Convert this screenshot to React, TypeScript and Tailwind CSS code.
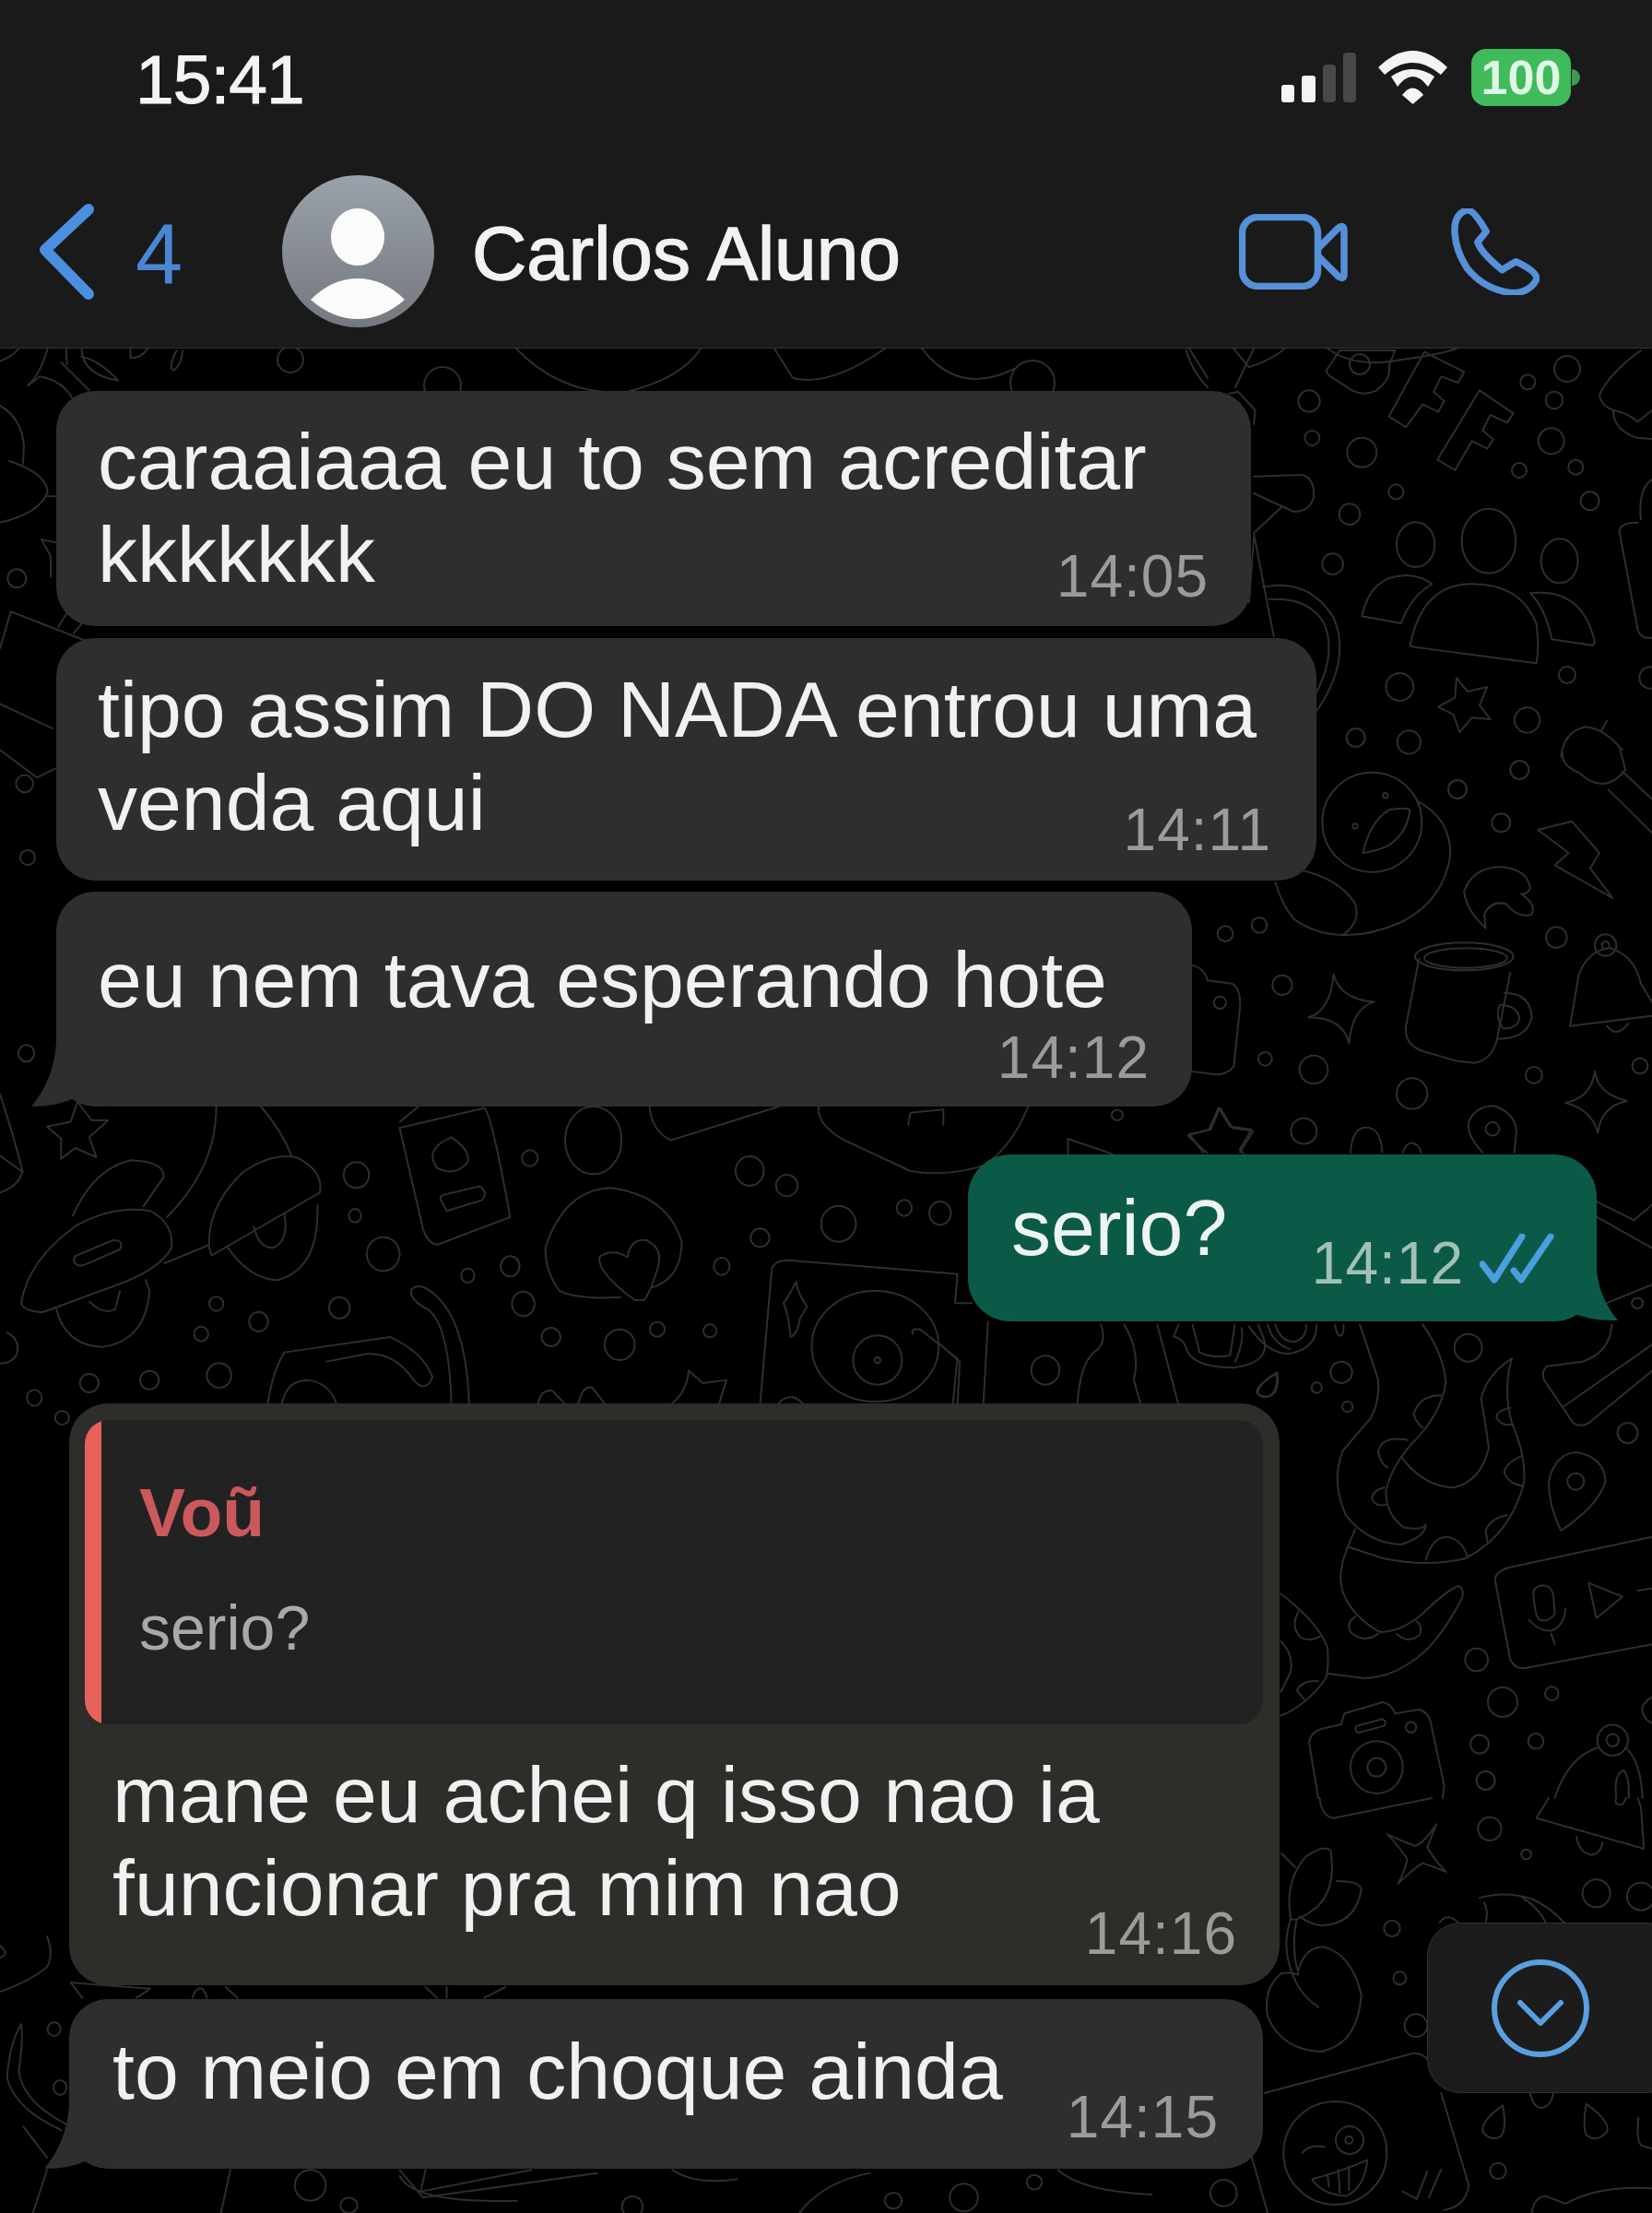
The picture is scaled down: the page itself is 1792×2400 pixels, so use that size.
type Dot = number[];

interface SceneProps {
  t: string;
  paths: string[];
  dots: Dot[];
}

// wallpaper pieces, each one written in the coordinates of its own crop
const scenes: SceneProps[] = [
  {
    t: "translate(1280 370) scale(0.3333)",
    dots: [[420, 195, 35], [430, 315, 24], [592, 362, 48], [703, 490, 24], [552, 563, 34], [497, 725, 34], [1132, 133, 24], [1218, 192, 28], [1208, 325, 42], [1104, 420, 24], [1288, 410, 24], [1334, 520, 30], [715, 1125, 45], [1260, 1086, 27], [1130, 1233, 41], [572, 1290, 30], [745, 1305, 38], [1530, 1095, 35], [585, 75, 33], [1005, 650, 88, 105], [767, 662, 62, 73], [1235, 715, 60, 72]],
    paths: [
      "M480 90 L520 30 L700 30 L680 80 Q690 120 640 160 Q600 180 560 160 L490 115 Q470 100 480 90",
      "M795 35 L925 100 L905 135 L850 115 L825 165 L860 195 L840 230 L790 205 L735 280 L680 245 Z",
      "M975 160 L1085 235 L1065 265 L1010 240 L985 290 L1020 320 L1000 350 L950 325 L895 420 L838 385 Z",
      "M750 985 Q790 790 950 790 Q1110 790 1160 920 Q1170 1000 1160 1048 L760 995 Q745 990 750 985Z",
      "M592 895 Q620 760 740 762 Q790 765 820 790 Q750 830 720 918 Z",
      "M1140 820 Q1310 800 1350 980 L1345 990 L1210 970 Q1190 870 1140 820Z",
      "M900 1095 L935 1140 L1000 1125 L975 1185 L1010 1230 L950 1225 L910 1272 L890 1215 L840 1190 L895 1160 Z",
      "M1500 30 Q1400 100 1365 175 Q1370 210 1410 225 Q1410 290 1490 315 L1536 318",
      "M1410 225 Q1450 230 1490 262 L1536 225",
      "M1536 450 Q1490 480 1500 580 M1490 590 Q1430 590 1430 620 L1490 940 Q1500 970 1536 965",
      "M240 440 L400 435 Q440 450 435 510 Q420 555 370 555 L240 495",
      "M330 540 L240 625 L305 960 M240 640 L225 850",
      "M270 800 Q420 770 500 900 Q560 1040 440 1210 M290 840 Q420 830 470 920 Q510 1020 440 1150",
      "M20 30 Q40 100 90 150 M175 25 L225 85 Q300 60 340 25 M160 170 L190 165 L245 225 L240 270",
      "M1240 1350 Q1250 1270 1320 1255 Q1380 1260 1440 1330 M1390 1235 L1370 1270",
    ],
  },
  {
    t: "translate(1280 810) scale(0.3333)",
    dots: [[1105, 75, 30], [903, 138, 30], [1045, 247, 30], [1225, 620, 34], [147, 608, 25], [258, 580, 25], [333, 775, 32], [277, 1015, 22], [435, 1050, 46], [755, 1128, 50], [1152, 1068, 27], [1497, 1038, 25], [403, 1250, 42], [130, 832, 20], [1017, 1243, 22], [625, 245, 162], [668, 158, 8], [570, 258, 8], [925, 682, 160, 45], [930, 687, 135, 32], [1385, 645, 35], [1385, 645, 12]],
    paths: [
      "M770 175 Q880 230 880 350 Q860 500 720 570 Q620 615 530 612",
      "M390 400 Q520 430 570 510 Q590 570 530 612 Q440 610 370 560 Q330 510 310 440",
      "M595 345 Q620 240 680 205 Q730 195 748 205 Q740 280 680 320 Q640 340 595 345Z",
      "M1165 270 L1275 242 L1365 345 L1335 395 L1408 492 L1220 385 L1265 345 Z",
      "M995 590 Q930 530 925 470 Q950 395 1040 390 Q1130 395 1140 460 Q1130 480 1110 478 Q1160 510 1145 545 Q1100 560 1060 510 Q1010 500 990 545 Z",
      "M778 690 L735 910 Q730 970 790 990 L900 1022 L960 1028 Q1010 1020 1030 960 L1075 735",
      "M1055 800 Q1140 800 1145 880 Q1130 950 1035 950",
      "M1040 840 Q1100 840 1105 885 Q1095 920 1050 915 Q1025 880 1040 840Z",
      "M1270 905 L1298 740 Q1330 660 1400 655 Q1480 680 1500 770 L1536 830 M1270 908 L1536 875",
      "M1390 908 Q1420 950 1460 900",
      "M500 740 Q520 820 632 830 Q560 850 550 965 Q530 880 418 880 Q490 860 500 740Z",
      "M1350 1055 Q1360 1130 1455 1152 Q1370 1170 1360 1255 Q1340 1180 1255 1158 Q1340 1140 1350 1055Z",
      "M30 1260 L100 1245 L130 1175 L170 1240 L238 1250 L195 1320 M75 1320 L30 1260",
      "M985 1320 Q930 1260 940 1220 Q960 1170 1020 1168 Q1090 1190 1095 1250 L1088 1320",
      "M555 1320 Q560 1240 605 1238 Q655 1240 658 1320 M725 1320 Q735 1290 755 1288 Q780 1295 785 1320",
      "M40 710 Q80 720 90 760 L170 770 Q200 790 195 850 L175 1040 Q150 1070 110 1065 L30 1055",
      "M1245 20 Q1240 60 1300 85 Q1380 160 1450 75 L1430 0 M1440 80 L1536 170 M1395 140 L1536 280",
    ],
  },
  {
    t: "translate(1340 1430) scale(0.3333)",
    dots: [[758, 95, 45], [345, 175, 35], [265, 225, 17], [365, 287, 17], [1277, 372, 33], [785, 1110, 37], [870, 1248, 48], [1030, 1220, 22], [795, 1385, 30], [978, 1375, 25], [815, 1503, 30], [572, 1330, 17], [1108, 530, 27], [460, 1460, 85], [460, 1460, 30], [1228, 1372, 50], [1228, 1372, 20]],
    paths: [
      "M135 180 Q70 215 70 240 Q85 265 115 250 Q140 230 135 180Z",
      "M610 20 Q680 120 685 210 Q670 300 600 380 Q510 470 490 560 Q490 640 550 680 Q610 690 620 670 Q620 710 540 735 Q430 730 360 640 Q310 530 350 430 Q400 370 440 325 Q470 270 465 200 Q440 120 405 20",
      "M900 130 Q820 180 800 260 Q815 350 825 420 Q800 530 710 550 Q610 545 540 450",
      "M900 130 Q870 230 900 340 Q945 440 940 530 Q900 700 750 780 Q630 810 480 780 L365 742",
      "M670 250 Q600 250 580 310 Q590 340 610 355 M560 395 Q480 380 465 430 Q470 470 495 485 M485 550 Q445 560 445 585 Q455 615 490 605",
      "M895 290 Q850 300 850 320 Q860 350 905 345 M935 445 Q880 470 875 500 Q890 540 938 545 M885 640 Q830 650 815 690 L820 725 M620 785 Q640 710 690 710 Q740 720 755 775",
      "M390 685 L365 745 Q330 830 350 890 Q380 970 470 1020 Q540 1020 610 960 Q680 890 725 870 Q750 880 735 915 Q680 1020 620 1080 Q520 1170 420 1170 L300 1155",
      "M390 970 Q360 990 375 1020 Q420 1060 465 1025 M525 1025 Q560 1060 600 1030 Q610 1000 590 985",
      "M148 895 Q270 990 300 1070 Q305 1130 295 1170 Q230 1260 148 1292 M205 955 Q180 1000 210 1035 Q240 1055 275 1035 M148 1050 Q190 1090 180 1150 L148 1215 M270 1180 Q220 1175 200 1210 L225 1240",
      "M1060 690 Q1020 610 1020 530 Q1040 440 1110 435 Q1200 450 1205 530 Q1180 610 1060 690Z",
      "M1356 710 L890 810 Q845 825 845 850 L895 1110 Q910 1140 940 1138 L1356 1060",
      "M970 890 Q975 870 1000 868 Q1030 870 1035 900 L1040 960 Q1020 990 990 980 Q975 970 970 890Z",
      "M955 980 Q990 1020 1030 1015 Q1070 1000 1075 945 M1028 1025 L1040 1060",
      "M1150 860 L1260 905 L1175 975 Z M1310 885 L1356 878",
      "M1225 20 Q1220 110 1130 140 L1015 155 Q995 170 1005 200 L1100 340 Q1125 355 1150 340 L1356 170 M1070 285 L1356 85",
      "M20 30 Q30 70 0 140 M45 25 Q100 110 170 115 Q265 100 265 20 M130 20 Q150 80 195 75 Q235 60 230 20 M325 20 Q330 60 345 55 Q355 40 352 20",
      "M240 1380 Q245 1345 280 1335 L345 1320 L355 1285 L480 1248 Q510 1255 520 1285 L600 1272 Q630 1285 635 1310 L680 1520 L675 1560 M270 1560 L240 1380",
      "M395 1325 L480 1303 Q495 1315 485 1325 L400 1348 Q385 1340 395 1325Z",
      "M1040 1560 Q1080 1430 1180 1395 M1270 1395 Q1320 1440 1325 1560 M1240 1560 Q1230 1480 1265 1470 Q1285 1500 1280 1560",
      "M1356 1232 Q1320 1250 1325 1280 Q1335 1310 1356 1315",
    ],
  },
  {
    t: "translate(1300 1950) scale(0.3333)",
    dots: [[948, 100, 38], [1067, 183, 16], [1295, 310, 45], [1440, 320, 45], [630, 424, 26], [655, 586, 21], [708, 740, 37], [975, 1213, 26], [82, 1285, 43], [445, 1155, 168], [492, 1113, 45], [490, 1113, 12]],
    paths: [
      "M395 0 Q400 60 440 65 L760 0 M1140 0 L1100 65 L1450 165 L1440 30 L1430 0",
      "M1230 125 Q1240 180 1280 185 Q1310 180 1315 145 M1360 0 Q1350 25 1380 20 Q1395 0 1390 0",
      "M775 85 Q730 150 705 155 Q660 140 615 118 Q660 165 680 200 Q670 240 650 278 Q700 230 730 212 Q770 225 805 240 Q760 190 745 160 Q760 120 775 85Z",
      "M270 180 L315 225 M300 390 Q280 270 350 190 Q410 150 430 170 Q450 290 390 350 Q330 400 300 395Z",
      "M450 270 Q530 270 530 300 Q510 410 400 415 Q360 410 330 385",
      "M300 395 Q270 480 305 570 Q330 640 390 680 M320 395 Q300 480 325 570",
      "M325 560 Q350 480 410 485 Q500 510 530 640 Q520 800 400 825 Q270 820 225 710 Q210 620 270 570 Q300 565 325 575",
      "M215 960 L700 830 Q730 830 745 850 M790 960 L880 1260 Q870 1330 800 1340 M170 1155 L225 1350",
      "M338 1155 Q360 1125 410 1135 M370 1240 Q450 1220 550 1178 Q540 1270 480 1295 Q400 1290 370 1240Z",
      "M420 1225 L425 1265 M455 1210 L460 1285 M490 1200 L490 1275 M665 1280 L710 1305 L745 1215 M750 1300 L790 1208",
      "M915 325 Q1000 300 1090 330 Q1150 360 1190 405 M930 340 Q945 370 935 405 M1050 320 Q1110 360 1130 405 M785 405 Q810 370 845 405",
      "M990 1000 Q920 1050 925 1085 Q950 1120 985 1100 Q1005 1070 990 1000Z M1262 995 Q1250 1070 1262 1095 Q1295 1125 1330 1085 Q1340 1050 1262 995Z",
      "M1432 1040 Q1425 1110 1440 1130 L1476 1140 M1080 960 Q1090 1010 1120 1008 Q1150 1000 1155 960",
      "M1085 1350 Q1090 1300 1130 1295 L1195 1320 Q1300 1260 1476 1270",
    ],
  },
  {
    t: "translate(0 1100) scale(0.51 0.3333)",
    dots: [[56, 127, 17, 27], [758, 523, 27, 42], [1127, 468, 17, 26], [1262, 410, 60, 110], [755, 655, 13, 22], [815, 780, 35, 55], [1085, 820, 20, 33], [995, 850, 14, 23], [1113, 942, 24, 40], [1535, 820, 17, 28], [460, 942, 15, 23], [722, 955, 22, 35], [550, 1000, 20, 32], [428, 1040, 15, 24], [1172, 1050, 20, 30], [1318, 1075, 32, 50], [1398, 1025, 16, 24], [1510, 1030, 14, 21], [190, 1200, 20, 30], [318, 1190, 20, 30], [466, 1175, 26, 40], [73, 1248, 16, 26], [132, 1313, 15, 22]],
    paths: [
      "M165 285 L195 345 L230 345 L190 400 L205 465 L160 435 L130 470 L130 405 L100 365 L150 350 Z",
      "M45 940 Q60 800 160 690 Q240 620 320 640 Q370 680 365 760 Q340 830 250 880 L90 970 Q50 965 45 940Z",
      "M160 810 Q150 790 170 780 L240 735 Q265 735 255 765 L180 815 Q165 822 160 810Z",
      "M155 655 Q200 500 280 475 Q350 480 348 530 L305 625",
      "M120 960 Q140 1080 220 1082 Q310 1060 318 900 L310 865 M190 935 Q220 980 245 960 L255 900",
      "M445 760 Q440 620 520 510 Q580 450 630 465 Q690 510 680 580 L450 785 Z",
      "M355 660 Q460 500 460 300 M555 300 Q600 380 620 460 M350 810 L445 750",
      "M485 760 Q530 860 590 865 Q680 830 675 620 M540 690 Q550 760 580 760 Q615 740 605 650",
      "M850 370 L1030 305 Q1045 320 1085 660 L930 750 Q910 745 900 700 Z M850 350 L890 300",
      "M960 400 Q900 440 930 500 Q970 530 995 480 Q1000 440 960 400",
      "M940 610 Q930 590 950 585 L1020 560 Q1040 580 1025 605 L950 640 Z",
      "M1320 920 Q1230 930 1190 900 Q1160 840 1160 760 Q1200 570 1300 565 Q1420 590 1450 740 Q1450 860 1385 890",
      "M1350 930 Q1270 840 1275 790 Q1300 760 1335 790 Q1340 730 1375 735 Q1410 760 1400 820 Q1385 900 1370 930Z",
      "M570 1265 Q580 1160 605 1100 L830 1050 Q900 1100 920 1180 Q905 1235 880 1190 Q840 1100 780 1105 L695 1130",
      "M600 1265 Q610 1190 655 1190 Q700 1200 715 1265",
      "M875 895 Q870 930 910 960 Q955 1010 960 1265 M875 895 Q890 875 910 895 Q990 970 998 1265",
      "M1145 1265 Q1150 1220 1175 1225 L1200 1265 M1230 1265 Q1240 1205 1260 1215 L1285 1265",
      "M1430 1265 Q1460 1230 1465 1160 L1495 1200 L1545 1190 L1530 1265",
      "M0 260 Q30 400 48 510 Q40 560 0 580 M0 460 L45 510 M15 1035 Q45 1060 35 1110 Q20 1140 0 1135",
    ],
  },
  {
    t: "translate(600 1190) scale(0.51 0.3333)",
    dots: [[418, 240, 30, 48], [497, 287, 23, 35], [607, 412, 37, 58], [747, 360, 16, 26], [823, 377, 23, 38], [440, 457, 20, 30], [1047, 888, 30, 47], [1200, 58, 12, 17], [685, 810, 135, 180], [690, 855, 52, 80], [690, 855, 6, 10]],
    paths: [
      "M565 30 Q560 90 620 140 L760 240 Q840 260 920 220 Q980 150 1010 30 M755 90 L760 50 L830 40 L830 90",
      "M205 30 Q210 110 250 140 L480 30",
      "M465 560 Q470 530 500 530 L860 575 L855 670 L890 670 M465 560 L440 1000",
      "M765 770 Q760 750 780 755 L860 850 L850 1000 M820 800 L865 860 L860 1000 M925 730 L915 1000",
      "M517 600 Q500 650 490 670 Q500 700 505 780 Q520 770 525 720 L540 680 Q520 640 517 600Z",
      "M1415 35 L1440 95 L1485 105 L1460 170 L1470 185 M1350 125 L1395 105 L1415 35 M1350 125 L1390 180",
      "M1095 135 L1095 185 M1095 135 L1190 185",
      "M1165 740 Q1180 800 1150 830 Q1120 870 1115 1000 M1215 740 Q1250 830 1235 920 L1250 1000 M1285 740 L1330 1000",
      "M1320 780 L1330 740 M1320 780 Q1340 780 1350 830 Q1370 880 1450 880 Q1530 860 1510 780 L1500 740 M1360 740 L1375 830 Q1400 850 1440 840 L1450 740 M1520 740 Q1530 800 1568 820",
      "M1540 895 Q1500 930 1498 965 Q1520 985 1535 960 Q1545 930 1540 895Z",
      "M480 995 Q490 975 510 975 Q525 985 530 995",
    ],
  },
  {
    t: "translate(1000 1200) scale(0.505 0.3333)",
    dots: [[1537, 640, 12, 17]],
    paths: ["M1450 310 L1530 370 L1568 320 M1450 360 L1568 460 M1470 640 L1568 580"],
  },
  {
    t: "translate(0 2100) scale(0.51 0.3333)",
    dots: [[115, 302, 14, 22], [128, 492, 14, 24], [660, 810, 33, 50], [742, 875, 18, 25], [1345, 880, 22, 35], [2050, 850, 30, 45], [2200, 800, 16, 24], [1900, 860, 18, 26]],
    paths: [
      "M0 180 Q60 150 100 100 Q115 60 100 0 M0 30 Q15 50 10 60 L0 70",
      "M150 150 L190 155 L320 170 L290 200 M150 150 L175 200",
      "M45 285 Q20 350 15 460 Q30 560 130 630 M45 285 Q50 330 40 440 Q50 540 140 610 M50 620 Q80 680 100 720",
      "M70 900 L100 760 M490 760 Q480 830 470 900 M850 760 L900 850 L1270 770 M905 760 L895 830 L1130 760",
      "M850 780 Q880 870 1100 860 M1430 760 Q1480 810 1568 790 M410 200 Q415 165 430 170 Q440 190 440 200 M480 165 L505 200",
      "M950 165 L950 200 M905 165 L930 200 M1030 200 L1075 165",
      "M1700 900 Q1750 800 1850 770 M2250 760 Q2300 830 2450 840",
    ],
  },
  {
    t: "translate(0 370) scale(0.3333)",
    dots: [[55, 772, 30], [80, 1440, 28], [90, 1680, 24]],
    paths: [
      "M0 210 Q70 250 78 340 L75 400 M30 390 Q150 430 155 490 Q130 560 0 590 M155 505 L180 505",
      "M135 645 L180 655 M135 645 L165 700 L165 765",
      "M35 880 L0 1000 M35 880 L280 975 M190 930 L220 880 M240 950 L270 915",
      "M0 65 Q40 50 60 25 M90 145 Q130 110 155 25 M90 145 L130 115 Q210 130 240 195 M200 70 L290 160 M215 25 L218 75",
      "M265 25 Q270 110 385 128 Q320 60 265 50 M425 25 L425 55 Q460 55 480 25 M575 30 Q545 90 565 95 Q590 80 595 30",
      "M0 1180 L170 1260 M0 1330 L120 1420 L180 1390",
    ],
  },
  {
    t: "translate(0 370)",
    dots: [[315, 20, 14], [480, 48, 20], [1120, 45, 24], [1700, 30, 14]],
    paths: [
      "M560 8 Q610 60 680 55 Q740 40 760 8 M840 8 L860 40 Q900 50 960 8 M1000 8 Q1040 60 1100 30",
      "M1290 8 L1310 40 M1360 8 L1340 50 M1440 8 Q1470 30 1520 20 Q1560 15 1580 8",
    ],
  },
];

function Wallpaper() {
  return (
    <svg
      className="absolute left-0 top-0 h-[2022px] w-[1792px]"
      viewBox="0 378 1792 2022"
      fill="none"
      stroke="#2e2e2e"
      strokeWidth={2}
      strokeLinecap="round"
      strokeLinejoin="round"
    >
      {scenes.map((scene) => (
        <g key={scene.t} transform={scene.t}>
          {scene.paths.map((d) => (
            <path key={d} d={d} vectorEffect="non-scaling-stroke" />
          ))}
          {scene.dots.map(([cx, cy, rx, ry]) => (
            <ellipse key={`${cx}-${cy}-${rx}`} cx={cx} cy={cy} rx={rx} ry={ry ?? rx} vectorEffect="non-scaling-stroke" />
          ))}
        </g>
      ))}
    </svg>
  );
}

function StatusBar() {
  return (
    <div className="flex h-[168px] items-center justify-between pl-[147px] pr-[78px]">
      <span className="mt-[4px] text-[75px] leading-none tracking-[-1px] text-[#f4f4f4] [-webkit-text-stroke:1px_#f4f4f4]">15:41</span>
      <div className="flex items-center">
        <svg width="81" height="54" viewBox="0 0 81 54">
          <rect x="0" y="35" width="14" height="19" rx="3" fill="#f4f4f4" />
          <rect x="22" y="25" width="15" height="29" rx="3" fill="#f4f4f4" />
          <rect x="45" y="13" width="14" height="41" rx="4" fill="#484848" />
          <rect x="67" y="0" width="14" height="54" rx="4" fill="#484848" />
        </svg>
        <svg className="ml-[24px]" width="75" height="58" viewBox="0 0 75 58" fill="#f4f4f4">
          <path d="M0 18 Q37.5 -18 75 18 L68 26 Q37.5 0 7 26Z" />
          <path d="M14 28 Q37.5 12 61 28 L54 39 Q37.5 17 21 39 Z" />
          <path d="M26 48 Q37.5 33 49 48 L37.5 58Z" />
        </svg>
        <div className="ml-[26px] flex h-[62px] w-[108px] items-center justify-center rounded-[16px] bg-[#3fbb5c] text-[52px] font-bold leading-none text-[#dff7e4]">
          100
        </div>
        <div className="ml-px h-[18px] w-[9px] rounded-r-full bg-[#3c9a55]" />
      </div>
    </div>
  );
}

function NavBar() {
  return (
    <div className="flex h-[209px] items-center pl-[42px] pr-[122px]">
      <svg width="60" height="104" viewBox="0 0 60 104" fill="none" stroke="#4a8fe0" strokeWidth="12" strokeLinecap="round" strokeLinejoin="round">
        <path d="M54 6 L7 50 L54 98" />
      </svg>
      <span className="ml-[45px] mt-[5px] w-[51px] text-[92px] font-light leading-none text-[#4a86d4]">4</span>
      <div className="ml-[108px] flex h-[165px] w-[165px] items-center justify-center rounded-full bg-gradient-to-b from-[#9ba2ab] to-[#74787f]">
        <svg width="165" height="165" viewBox="0 0 165 165" fill="#fbfbfb">
          <ellipse cx="82" cy="67" rx="29" ry="31" />
          <path d="M31 135 Q54 112 82 112 Q110 112 133 135 Q109 156 82 156 Q55 156 31 135Z" />
        </svg>
      </div>
      <span className="ml-[41px] mt-[5px] text-[82px] leading-none text-[#f2f2f2] [-webkit-text-stroke:1.5px_#f2f2f2]">Carlos Aluno</span>
      <svg className="ml-auto" width="118" height="82" viewBox="0 0 118 82" fill="none" stroke="#5590d8" strokeWidth="7.5" strokeLinejoin="round">
        <rect x="3.5" y="3.5" width="82" height="75" rx="17" />
        <path d="M86 37 L108 15 Q114 11 114 18 L114 65 Q114 72 108 68 L86 46" />
      </svg>
      <svg className="ml-[112px]" width="96" height="94" viewBox="0 0 96 94" fill="none" stroke="#5590d8" strokeWidth="7.5" strokeLinejoin="round">
        <path d="M4.2 18.3 Q6.1 5 17.5 1.7 Q25 1.7 38.2 25 L28.8 36.7 Q32.5 48.3 55.2 66.7 L70.3 57.7 Q93 68.3 93 76.7 Q85.4 91.7 66.5 91.7 Q36.3 88.3 17.5 65 Q2.4 41.7 4.2 18.3Z" />
      </svg>
    </div>
  );
}

function TailLeft() {
  return (
    <svg className="absolute bottom-0 left-[-27px]" width="90" height="70" viewBox="0 0 90 70" fill="#2e2e2c">
      <path d="M27 0 Q25 40 0 70 Q30 70 48 60 Q62 69 90 70 L90 0Z" />
    </svg>
  );
}

function Time({ children, className }: { children: string; className: string }) {
  return <span className={`text-[64px] leading-[64px] tracking-[1px] ${className}`}>{children}</span>;
}

export default function App() {
  const text = "text-[86px] leading-[101px] text-[#f1f1f1]";
  const stamp = "self-end text-[#9b9b99]";

  return (
    <div className="flex h-[2400px] w-[1792px] flex-col overflow-hidden bg-black font-['Liberation_Sans',Arial,sans-serif]">
      <header className="border-b border-[#333333] bg-[#1a1a1a]">
        <StatusBar />
        <NavBar />
      </header>

      <main className="relative flex h-[2022px] flex-col overflow-hidden pt-[46px]">
        <Wallpaper />

        <div className="relative ml-[61px] flex w-[1296px] flex-col rounded-[42px] bg-[#2e2e2c] pb-[22px] pl-[45px] pr-[46px] pt-[26px]">
          <p className={text}>caraaiaaa eu to sem acreditar<br />kkkkkkk</p>
          <Time className={`${stamp} -mt-[59px]`}>14:05</Time>
        </div>

        <div className="relative ml-[61px] mt-[13px] flex w-[1367px] flex-col rounded-[42px] bg-[#2e2e2c] pb-[23px] pl-[45px] pr-[49px] pt-[27px]">
          <p className={text}>tipo assim DO NADA entrou uma<br />venda aqui</p>
          <Time className={`${stamp} -mt-[53px]`}>14:11</Time>
        </div>

        <div className="relative ml-[61px] mt-[12px] flex w-[1232px] flex-col rounded-[42px] bg-[#2e2e2c] pb-[21px] pl-[45px] pr-[46px] pt-[45px]">
          <TailLeft />
          <p className={`relative ${text}`}>eu nem tava esperando hote</p>
          <Time className={`relative ${stamp} mt-[2px]`}>14:12</Time>
        </div>

        <div className="relative ml-auto mr-[60px] mt-[52px] flex h-[181px] w-[682px] justify-between rounded-[46px] bg-[#0a5a47] pb-[31px] pl-[47px] pr-[46px] pt-[29px]">
          <svg className="absolute bottom-0 right-[-23px]" width="80" height="55" viewBox="0 0 80 55" fill="#0a5a47">
            <path d="M57 0 Q60 30 80 54 Q50 55 25 44 Q15 52 0 55 L0 0Z" />
          </svg>
          <p className="relative text-[86px] leading-[101px] text-[#eef4f1]">serio?</p>
          <div className="relative flex items-end gap-[17px]">
            <Time className="text-[#a3c0b6]">14:12</Time>
            <svg className="mb-[10px]" width="81" height="54" viewBox="0 0 81 54" fill="none" stroke="#4b9fe0" strokeWidth="7" strokeLinecap="round" strokeLinejoin="round">
              <path d="M3 33 L16 50 L46 3 M37 40 L45 50 L77 3" />
            </svg>
          </div>
        </div>

        <div className="relative ml-[75px] mt-[89px] flex w-[1313px] flex-col rounded-[42px] bg-[#2d2d2a] pb-[24px] pl-[17px] pr-[18px] pt-[18px]">
          <div className="flex h-[330px] overflow-hidden rounded-[26px] bg-[#222222]">
            <div className="w-[18px] bg-[#e8625c]" />
            <div className="flex flex-col pl-[41px] pt-[64px]">
              <span className="text-[75px] font-bold leading-[72px] text-[#c9595c]">Voũ</span>
              <span className="mt-[55px] text-[68px] leading-[68px] text-[#a9a9a9]">serio?</span>
            </div>
          </div>
          <p className={`ml-[30px] mt-[26px] ${text}`}>mane eu achei q isso nao ia<br />funcionar pra mim nao</p>
          <Time className={`${stamp} -mt-[33px] mr-[28px]`}>14:16</Time>
        </div>

        <div className="relative ml-[75px] mt-[15px] flex w-[1295px] flex-col rounded-[42px] bg-[#2e2e2c] pb-[24px] pl-[47px] pr-[48px] pt-[28px]">
          <TailLeft />
          <p className={`relative ${text}`}>to meio em choque ainda</p>
          <Time className={`relative ${stamp} -mt-[33px]`}>14:15</Time>
        </div>

        <button className="absolute right-[-30px] top-[1707px] flex h-[185px] w-[274px] items-center rounded-[36px] border border-[#333333] bg-[#1c1c1c] pl-[66px]">
          <svg width="112" height="112" viewBox="0 0 112 112" fill="none" stroke="#5a9fe0" strokeWidth="6" strokeLinecap="round" strokeLinejoin="round">
            <circle cx="56" cy="56" r="50" />
            <path d="M34 50 L56 72 L78 50" />
          </svg>
        </button>
      </main>
    </div>
  );
}
